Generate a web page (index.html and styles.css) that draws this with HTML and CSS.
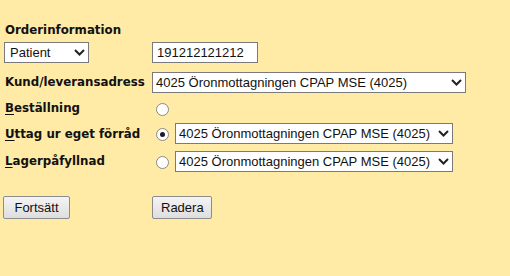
FILE: index.html
```html
<!DOCTYPE html>
<html>
<head>
<meta charset="utf-8">
<link rel="stylesheet" href="styles.css">
</head>
<body>
<form class="order">
  <div class="grid">
    <div class="heading">Orderinformation</div>
    <div></div>

    <div class="cell">
      <span class="sel sel-patient">
        <select><option>Patient</option></select>
        <svg class="chev" viewBox="0 0 11 7" width="11" height="7"><path d="M1 1 L5.5 5.5 L10 1" fill="none" stroke="#222" stroke-width="2"/></svg>
      </span>
    </div>
    <div class="cell"><input class="txt" type="text" value="191212121212"></div>

    <div class="cell label">Kund/leveransadress</div>
    <div class="cell">
      <span class="sel sel-kund">
        <select><option>4025 Öronmottagningen CPAP MSE (4025)</option></select>
        <svg class="chev" viewBox="0 0 11 7" width="11" height="7"><path d="M1 1 L5.5 5.5 L10 1" fill="none" stroke="#222" stroke-width="2"/></svg>
      </span>
    </div>

    <div class="cell label"><u>B</u>eställning</div>
    <div class="cell"><span class="radio"></span></div>

    <div class="cell label"><u>U</u>ttag ur eget förråd</div>
    <div class="cell">
      <span class="radio checked"></span>
      <span class="sel sel-lager">
        <select><option>4025 Öronmottagningen CPAP MSE (4025)</option></select>
        <svg class="chev" viewBox="0 0 11 7" width="11" height="7"><path d="M1 1 L5.5 5.5 L10 1" fill="none" stroke="#222" stroke-width="2"/></svg>
      </span>
    </div>

    <div class="cell label"><u>L</u>agerpåfyllnad</div>
    <div class="cell">
      <span class="radio"></span>
      <span class="sel sel-lager">
        <select><option>4025 Öronmottagningen CPAP MSE (4025)</option></select>
        <svg class="chev" viewBox="0 0 11 7" width="11" height="7"><path d="M1 1 L5.5 5.5 L10 1" fill="none" stroke="#222" stroke-width="2"/></svg>
      </span>
    </div>
  </div>

  <div class="buttons">
    <div class="bcell"><button type="button" class="btn btn-fortsatt">Fortsätt</button></div>
    <div class="bcell"><button type="button" class="btn btn-radera">Radera</button></div>
  </div>
</form>
</body>
</html>
```

FILE: styles.css
```css
html, body {
  margin: 0;
  padding: 0;
  background: #ffeaa6;
  height: 100%;
}
body {
  font-family: "DejaVu Sans", Verdana, sans-serif;
  color: #111;
}
.order {
  padding: 20px 0 0 4px;
}
.grid {
  display: grid;
  grid-template-columns: 148px 340px;
  grid-template-rows: 20px 25px 34px 18px 33px 22px;
}
.cell {
  display: flex;
  align-items: center;
}
.heading {
  font-weight: bold;
  font-size: 11.8px;
  display: flex;
  align-items: center;
  padding-left: 1px;
}
.label {
  font-weight: bold;
  font-size: 11.8px;
  padding-left: 1px;
  white-space: nowrap;
}
.label u {
  text-decoration-thickness: 1px;
  text-underline-offset: 2px;
}
.sel {
  position: relative;
  display: inline-block;
  height: 21px;
}
.sel select {
  -webkit-appearance: none;
  appearance: none;
  box-sizing: border-box;
  height: 21px;
  margin: 0;
  border: 1px solid #7a7a7a;
  border-radius: 0;
  background: #fff;
  font-family: "Liberation Sans", Arial, sans-serif;
  font-size: 13px;
  color: #111;
  padding: 0 0 0 3px;
  outline: none;
}
.sel .chev {
  position: absolute;
  right: 4px;
  top: 7px;
  pointer-events: none;
}
.sel-patient select { width: 85px; padding-left: 5px; }
.sel-kund select { width: 314px; }
.sel-lager select { width: 278px; }
.txt {
  box-sizing: border-box;
  width: 106px;
  height: 21px;
  margin: 0;
  border: 1px solid #7a7a7a;
  border-radius: 0;
  background: #fff;
  font-family: "Liberation Sans", Arial, sans-serif;
  font-size: 13px;
  color: #111;
  padding: 0 0 0 4px;
  outline: none;
}
.radio {
  box-sizing: border-box;
  width: 13px;
  height: 13px;
  border: 1px solid #8a8a8a;
  border-radius: 50%;
  background: #fff;
  margin-left: 4px;
  margin-right: 6px;
  margin-top: 2px;
  flex: none;
  display: flex;
  align-items: center;
  justify-content: center;
}
.radio.checked::after {
  content: "";
  width: 5px;
  height: 5px;
  border-radius: 50%;
  background: #1a1a2a;
}
.buttons {
  display: grid;
  grid-template-columns: 148px auto;
  margin-top: 24px;
}
.bcell {
  display: flex;
}
.btn {
  box-sizing: border-box;
  height: 23px;
  margin: 0;
  border: 1px solid #8c8c8c;
  border-radius: 2px;
  background: linear-gradient(#f4f4f4, #dedede);
  font-family: "Liberation Sans", Arial, sans-serif;
  font-size: 13px;
  color: #111;
  padding: 0 8px;
}
.btn-fortsatt { width: 67px; margin-left: -1px; }
.btn-radera { width: 60px; }
```
